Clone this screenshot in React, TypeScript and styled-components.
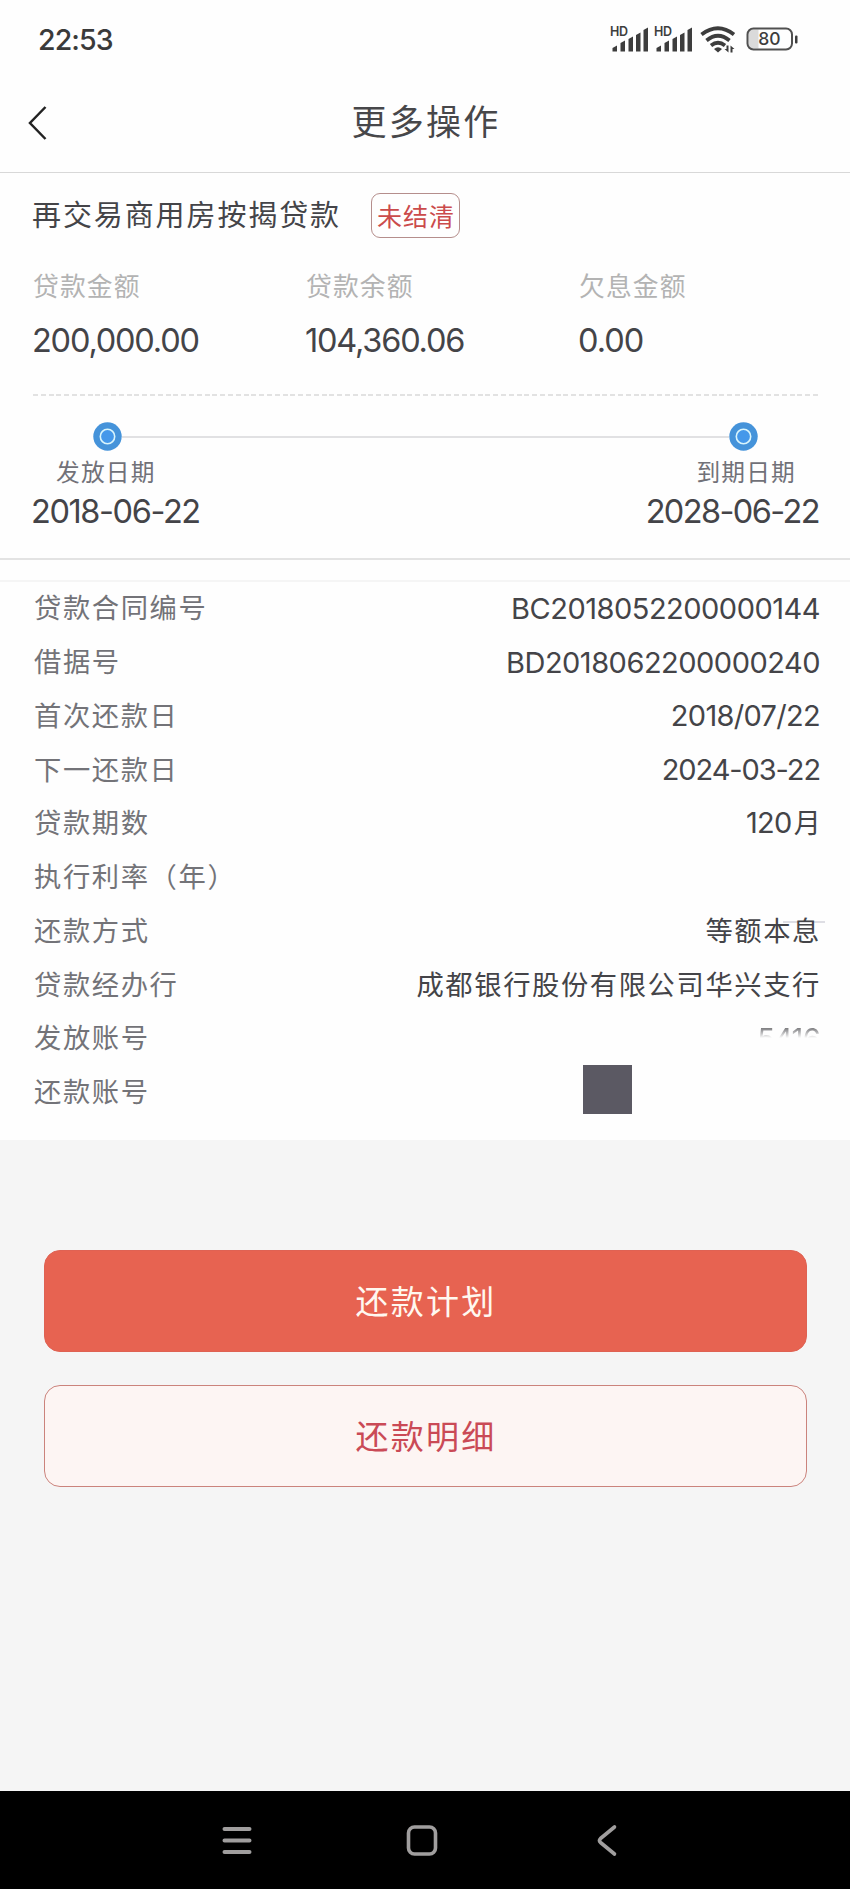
import React from 'react';
import styled, { createGlobalStyle } from 'styled-components';

const Global = createGlobalStyle`
  * { box-sizing: border-box; }
  body { margin: 0; background: #f5f5f5; }
`;

const Screen = styled.main`
  width: 850px;
  height: 1889px;
  display: flex;
  flex-direction: column;
  background: #f5f5f5;
  color: #444448;
  font-family: Inter, 'Noto Sans CJK SC', sans-serif;
  white-space: nowrap;
  overflow: hidden;
`;

const StatusBar = styled.div`
  height: 78px;
  padding: 0 50px 0 38px;
  display: flex;
  align-items: center;
  justify-content: space-between;
  background: #fefefe;
`;

const Clock = styled.span`
  font-size: 28.5px;
  font-weight: 500;
  color: #3a3a3a;
  letter-spacing: -0.9px;
`;

const Header = styled.header`
  height: 95px;
  padding-bottom: 7px;
  display: grid;
  grid-template-columns: 77px 1fr 75px;
  align-items: center;
  background: #fefefe;
  border-bottom: 1px solid #d8d8d8;
`;

const BackButton = styled.button`
  display: flex;
  padding: 3px 0 0 27px;
  border: 0;
  background: none;
`;

const HeaderTitle = styled.h1`
  margin: 0;
  text-align: center;
  font-size: 35px;
  line-height: 50px;
  font-weight: 400;
  letter-spacing: 2.3px;
  color: #47474a;
`;

const Summary = styled.section`
  height: 387px;
  padding: 20px 31px 0 32px;
  display: flex;
  flex-direction: column;
  background: #fefefe;
  border-bottom: 2px solid #e3e3e3;
`;

const TitleRow = styled.div`
  display: flex;
  align-items: center;
  height: 44px;
`;

const LoanName = styled.h2`
  width: 339px;
  margin: 0;
  padding-top: 1px;
  font-size: 29px;
  line-height: 40px;
  font-weight: 400;
  letter-spacing: 1.9px;
`;

const Tag = styled.span`
  width: 89px;
  height: 45px;
  display: flex;
  align-items: center;
  justify-content: center;
  padding: 0 0 1px 1px;
  border: 1px solid #b58e8c;
  border-radius: 9px;
  color: #cb4b4b;
  font-size: 25px;
  letter-spacing: 1px;
`;

const Amounts = styled.div`
  height: 157px;
  padding-top: 32px;
  display: grid;
  grid-template-columns: 273px 273px 1fr;
`;

const AmountLabel = styled.div`
  height: 36px;
  padding-left: 1px;
  font-size: 25.8px;
  line-height: 36px;
  letter-spacing: 1.1px;
  color: #b3b3b3;
`;

const AmountValue = styled.div<{ $spacing: number }>`
  margin-top: 16px;
  font-size: 32.5px;
  line-height: 40px;
  letter-spacing: ${(p) => p.$spacing}px;
`;

const DashedRule = styled.div`
  height: 2px;
  margin-left: 1px;
  background: repeating-linear-gradient(90deg, #e2e2e2 0 5px, transparent 5px 7.8px);
`;

const Timeline = styled.div`
  display: flex;
  align-items: center;
  height: 30px;
  margin: 25px 61px 0 61px;
`;

const Track = styled.div`
  flex: 1;
  height: 2px;
  margin-top: 2px;
  background: #e1e1e3;
`;

const Dates = styled.div`
  display: flex;
  justify-content: space-between;
  margin-top: 2px;
`;

const DateBlock = styled.div<{ $end?: boolean }>`
  display: flex;
  flex-direction: column;
  align-items: ${(p) => (p.$end ? 'flex-end' : 'flex-start')};
`;

const DateLabel = styled.div`
  padding: 0 23px 0 24px;
  font-size: 23.7px;
  line-height: 40px;
  letter-spacing: 1.2px;
  color: #717178;
`;

const DateValue = styled.div<{ $spacing: number }>`
  margin-left: -1px;
  font-size: 32.5px;
  line-height: 38px;
  letter-spacing: ${(p) => p.$spacing}px;
`;

const Details = styled.section`
  height: 580px;
  padding-top: 20px;
  background: #fefefe;
`;

const DetailList = styled.dl`
  margin: 0;
  padding: 0 30px 0 34px;
  border-top: 2px solid #f5f5f5;
`;

const DetailRow = styled.div`
  height: 53.75px;
  display: flex;
  justify-content: space-between;
  align-items: center;
`;

const Term = styled.dt`
  padding-top: 1px;
  font-size: 27.3px;
  line-height: 40px;
  letter-spacing: 1.6px;
  color: #737378;
`;

const Value = styled.dd<{ $spacing?: number }>`
  margin: 0;
  font-size: 29px;
  line-height: 40px;
  letter-spacing: ${(p) => p.$spacing ?? 0}px;
`;

const ChineseValue = styled(Value)`
  padding-top: 1px;
  font-size: 27.3px;
  letter-spacing: 1.6px;
  margin-right: -1px;
`;

const Unit = styled.span`
  font-size: 27px;
  margin-left: 2px;
`;

const SmudgedValue = styled(ChineseValue)`
  position: relative;
  z-index: 0;
  &::after {
    content: '';
    position: absolute;
    z-index: -1;
    right: -4px;
    top: 10px;
    width: 42px;
    height: 2px;
    background: #dedee4;
  }
`;

const FadedAccount = styled(Value)`
  mask-image: linear-gradient(#000 9px, transparent 19px);
  opacity: 0.7;
`;

const Redaction = styled.div`
  width: 49px;
  height: 49px;
  margin: -7px 188px 0 0;
  background: #5b5963;
`;

const Actions = styled.section`
  flex: 1;
  padding: 110px 43px 0 44px;
  display: flex;
  flex-direction: column;
  gap: 33px;
`;

const ActionButton = styled.button<{ $primary?: boolean }>`
  height: 102px;
  padding: 0 0 2px 1px;
  border: ${(p) => (p.$primary ? '1px solid #df6253' : '1.5px solid #cb837c')};
  border-radius: 16px;
  background: ${(p) => (p.$primary ? '#e76351' : '#fdf5f3')};
  color: ${(p) => (p.$primary ? '#fff8f0' : '#ca4a56')};
  font-family: inherit;
  font-size: 33px;
  letter-spacing: 2.2px;
`;

const NavBar = styled.nav`
  height: 98px;
  padding: 0 226px 0 218px;
  display: flex;
  align-items: center;
  justify-content: space-between;
  background: #000;
`;

const BARS = [[0, 5], [8, 10], [16, 14], [23.5, 18], [31, 23]];

const Signal = ({ x }: { x: number }) => (
  <g transform={`translate(${x} 0)`}>
    <text x="-2.5" y="11" fontSize="12.5" fontWeight="600" fontFamily="Inter, sans-serif" textLength="18">HD</text>
    {BARS.map(([left, h]) => (
      <path key={left} d={`M${left} 27V${28.5 - h}L${left + 4.5} ${26 - h}V27Z`} />
    ))}
  </g>
);

const StatusIcons = () => (
  <svg width="190" height="32" viewBox="0 -1.5 190 32" fill="#3d3d3d">
    <Signal x={2.5} />
    <Signal x={46.5} />
    <g fill="none" stroke="#3d3d3d" strokeWidth="3.8">
      <path d="M91.5 10Q108-2.5 124 10" />
      <path d="M96.5 16Q108 6.5 119.5 16" />
      <path d="M101 21Q108 15.5 115 21" />
    </g>
    <path d="M104 24.5Q108 21 112 24.5L108 28Z" />
    <path d="M118.5 21V28L114.5 24.5H116.5V21ZM120.5 28V21L124.5 24.5H122.5V28Z" />
    <rect x="138.5" y="5" width="10" height="19" fill="#dadada" />
    <rect x="137.5" y="4" width="44.5" height="21" rx="6" fill="none" stroke="#505050" strokeWidth="2" />
    <rect x="185" y="11" width="2.5" height="8" rx="1" />
    <text x="159.5" y="20.8" textAnchor="middle" fontSize="17.5" fontWeight="500" fontFamily="Inter, sans-serif">80</text>
  </svg>
);

const Marker = () => (
  <svg width="29" height="29" viewBox="0 0 29 29">
    <circle cx="14.5" cy="14.5" r="14.2" fill="#4593da" />
    <circle cx="14.5" cy="14.5" r="7.2" fill="#4598ea" stroke="#d9f5fc" strokeWidth="1.6" />
  </svg>
);

export default function App() {
  return (
    <>
      <Global />
      <Screen>
        <StatusBar>
          <Clock>22:53</Clock>
          <StatusIcons />
        </StatusBar>
        <Header>
          <BackButton aria-label="返回">
            <svg width="22" height="36" viewBox="0 0 22 36" fill="none" stroke="#222" strokeWidth="2.5">
              <path d="M18.5 2L3 18L18.5 34" />
            </svg>
          </BackButton>
          <HeaderTitle>更多操作</HeaderTitle>
        </Header>

        <Summary>
          <TitleRow>
            <LoanName>再交易商用房按揭贷款</LoanName>
            <Tag>未结清</Tag>
          </TitleRow>
          <Amounts>
            <div>
              <AmountLabel>贷款金额</AmountLabel>
              <AmountValue $spacing={-1.2}>200,000.00</AmountValue>
            </div>
            <div>
              <AmountLabel>贷款余额</AmountLabel>
              <AmountValue $spacing={-1.2}>104,360.06</AmountValue>
            </div>
            <div>
              <AmountLabel>欠息金额</AmountLabel>
              <AmountValue $spacing={-1}>0.00</AmountValue>
            </div>
          </Amounts>
          <DashedRule />
          <Timeline>
            <Marker />
            <Track />
            <Marker />
          </Timeline>
          <Dates>
            <DateBlock>
              <DateLabel>发放日期</DateLabel>
              <DateValue $spacing={-1.4}>2018-06-22</DateValue>
            </DateBlock>
            <DateBlock $end>
              <DateLabel>到期日期</DateLabel>
              <DateValue $spacing={-1.6}>2028-06-22</DateValue>
            </DateBlock>
          </Dates>
        </Summary>

        <Details>
          <DetailList>
            <DetailRow><Term>贷款合同编号</Term><Value $spacing={-0.5}>BC2018052200000144</Value></DetailRow>
            <DetailRow><Term>借据号</Term><Value $spacing={-0.5}>BD2018062200000240</Value></DetailRow>
            <DetailRow><Term>首次还款日</Term><Value $spacing={-0.7}>2018/07/22</Value></DetailRow>
            <DetailRow><Term>下一还款日</Term><Value $spacing={-1.1}>2024-03-22</Value></DetailRow>
            <DetailRow><Term>贷款期数</Term><Value $spacing={-0.7}>120<Unit>月</Unit></Value></DetailRow>
            <DetailRow><Term>执行利率（年）</Term></DetailRow>
            <DetailRow><Term>还款方式</Term><SmudgedValue>等额本息</SmudgedValue></DetailRow>
            <DetailRow><Term>贷款经办行</Term><ChineseValue>成都银行股份有限公司华兴支行</ChineseValue></DetailRow>
            <DetailRow><Term>发放账号</Term><FadedAccount $spacing={-0.7}>5416</FadedAccount></DetailRow>
            <DetailRow><Term>还款账号</Term><Redaction /></DetailRow>
          </DetailList>
        </Details>

        <Actions>
          <ActionButton $primary>还款计划</ActionButton>
          <ActionButton>还款明细</ActionButton>
        </Actions>

        <NavBar>
          <svg width="38" height="38" viewBox="0 0 38 38" stroke="#a09e9e" strokeWidth="4" strokeLinecap="round">
            <path d="M6.5 8H31.5M6.5 19.5H31.5M6.5 31H31.5" />
          </svg>
          <svg width="38" height="38" viewBox="0 0 38 38" fill="none" stroke="#a09e9e" strokeWidth="3.6">
            <rect x="6.5" y="6" width="27" height="27" rx="6" />
          </svg>
          <svg width="38" height="38" viewBox="0 0 38 38" fill="none" stroke="#a09e9e" strokeWidth="3.6" strokeLinecap="round" strokeLinejoin="round">
            <path d="M28.5 6L14.5 17.5Q12.5 19.5 14.5 21.5L28.5 33" />
          </svg>
        </NavBar>
      </Screen>
    </>
  );
}
